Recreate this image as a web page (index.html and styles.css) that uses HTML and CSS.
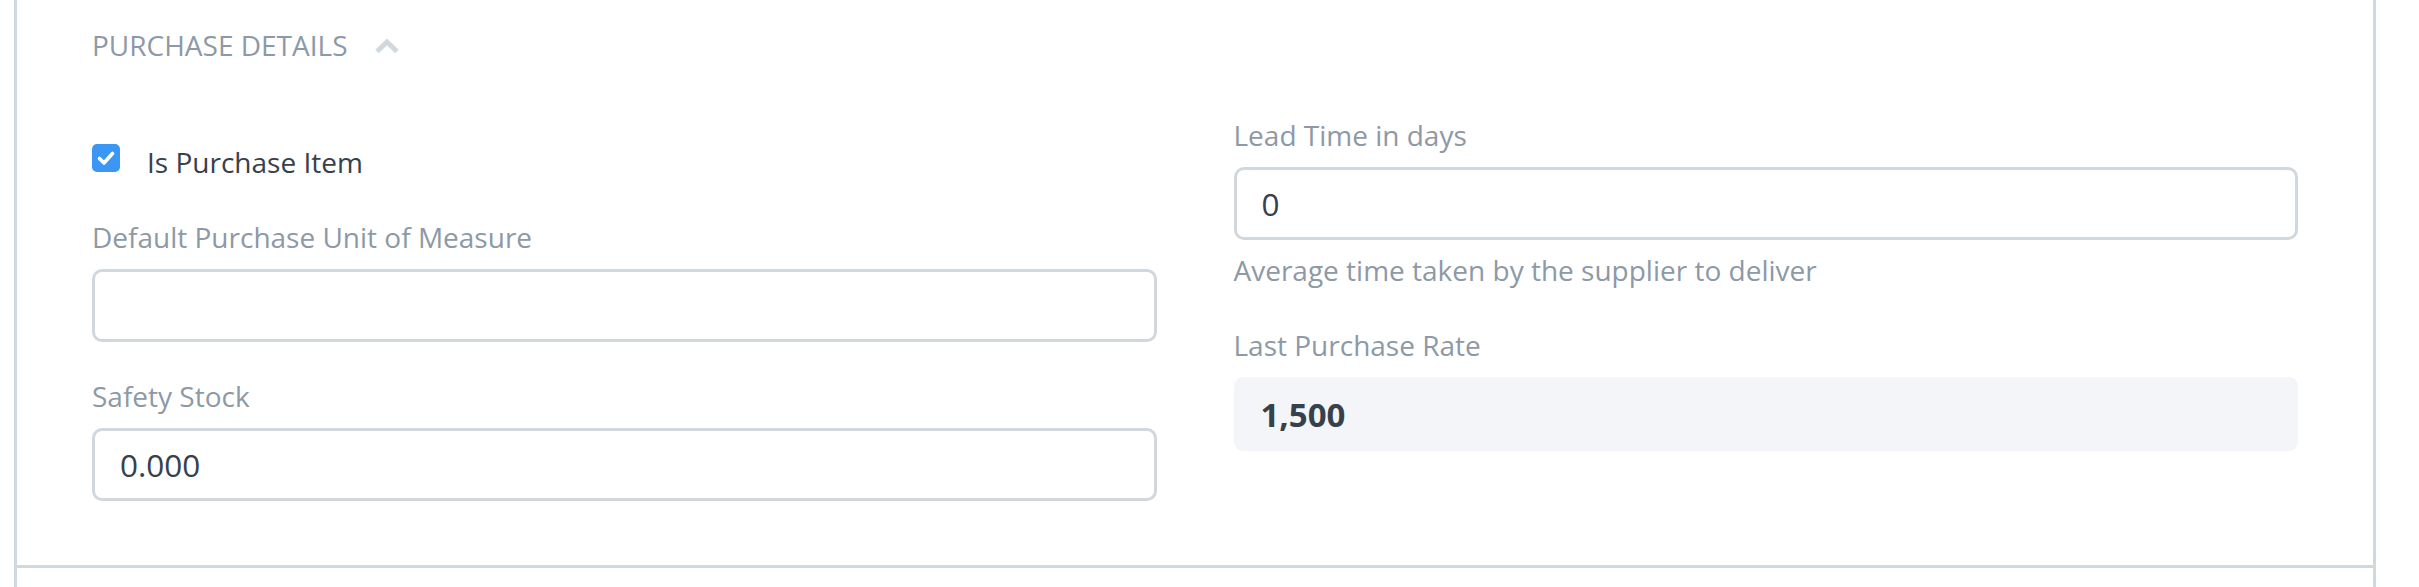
FILE: index.html
```html
<!DOCTYPE html>
<html lang="en">

<head>
  <meta charset="UTF-8">
  <meta name="viewport" content="width=device-width, initial-scale=1.0">
  <title>Item - Purchase Details</title>
  <link rel="stylesheet" href="styles.css">
</head>

<body>
  <div class="form-layout">
    <div class="form-section">
      <div class="section-head">
        <span>Purchase Details</span>
        <svg class="collapse-icon" width="26" height="16" viewBox="0 0 26 16">
          <polyline points="3,13.5 13,4 23,13.5" fill="none" stroke="#d1d8dd" stroke-width="5" />
        </svg>
      </div>

      <div class="section-body">
        <div class="form-column">
          <div class="form-group checkbox-group">
            <label class="checkbox">
              <span class="check-box">
                <svg width="28" height="28" viewBox="0 0 28 28">
                  <polyline points="7.5,14.5 12,19 20.5,9.5" fill="none" stroke="#fff" stroke-width="3.6"
                    stroke-linecap="round" stroke-linejoin="round" />
                </svg>
              </span>
              <span>Is Purchase Item</span>
            </label>
          </div>

          <div class="form-group">
            <label class="control-label">Default Purchase Unit of Measure</label>
            <input class="control-input" type="text" value="">
          </div>

          <div class="form-group">
            <label class="control-label">Safety Stock</label>
            <input class="control-input" type="text" value="0.000">
          </div>
        </div>

        <div class="form-column">
          <div class="form-group">
            <label class="control-label">Lead Time in days</label>
            <input class="control-input" type="text" value="0">
            <p class="help-box">Average time taken by the supplier to deliver</p>
          </div>

          <div class="form-group">
            <label class="control-label">Last Purchase Rate</label>
            <div class="static-value">1,500</div>
          </div>
        </div>
      </div>
    </div>

    <div class="form-section empty-section"></div>
  </div>
</body>

</html>
```

FILE: styles.css
```css
body {
  margin: 0;
  font-family: "Open Sans", "Noto Sans", sans-serif;
  background-color: #fff;
}

.form-layout {
  box-sizing: border-box;
  width: 2362px;
  margin-left: 14px;
  border-left: 3px solid #d1d8dd;
  border-right: 3px solid #d1d8dd;
}

.form-section {
  padding: 24px 75px 31px;
  border-bottom: 3px solid #d1d8dd;
}

.empty-section {
  height: 40px;
  padding: 0;
  border-bottom: none;
}

.section-head {
  display: flex;
  align-items: center;
  gap: 26px;
  margin-bottom: 48px;
  font-size: 28px;
  line-height: 42px;
  color: #8d99a6;
  text-transform: uppercase;
}

.collapse-icon {
  margin-top: 2px;
}

.section-body {
  display: grid;
  grid-template-columns: 1fr 1fr;
  column-gap: 77px;
}

.form-group {
  margin-bottom: 33px;
}

.control-label {
  display: block;
  margin-bottom: 11px;
  font-size: 28px;
  line-height: 42px;
  color: #8d99a6;
}

.control-input {
  display: block;
  box-sizing: border-box;
  width: 100%;
  height: 73px;
  margin: 0;
  padding: 0 25px;
  border: 3px solid #d1d8dd;
  border-radius: 10px;
  font-family: "Open Sans", "Noto Sans", sans-serif;
  font-size: 31.5px;
  color: #36414c;
  background-color: #fff;
  outline: none;
}

.help-box {
  margin: 9px 0 0;
  font-size: 28px;
  line-height: 42px;
  color: #8d99a6;
}

.static-value {
  display: flex;
  align-items: center;
  height: 74px;
  padding: 0 27px;
  border-radius: 9px;
  background-color: #f4f5f8;
  font-size: 33px;
  font-weight: 700;
  color: #36414c;
}

.checkbox-group {
  margin-top: 27px;
}

.checkbox {
  display: flex;
  align-items: flex-start;
  gap: 27px;
  font-size: 28px;
  line-height: 42px;
  color: #36414c;
}

.check-box {
  display: block;
  width: 28px;
  height: 28px;
  margin-top: 3px;
  border-radius: 5px;
  background-color: #3b97f3;
}

.check-box svg {
  display: block;
}
```
